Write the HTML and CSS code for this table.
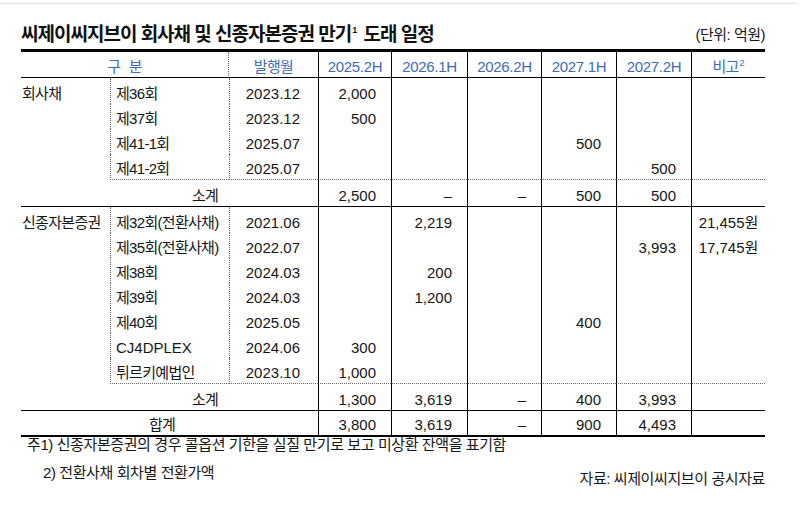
FILE: index.html
```html
<!DOCTYPE html>
<html lang="ko">
<head>
<meta charset="utf-8">
<link rel="stylesheet" href="styles.css">
</head>
<body>
<div class="page">
  <div class="titlebar">
    <h1 class="title">씨제이씨지브이 회사채 및 신종자본증권 만기<sup>1</sup> 도래 일정</h1>
    <div class="unit">(단위: 억원)</div>
  </div>
  <table class="tbl">
    <colgroup>
      <col class="w1"><col class="w2"><col class="w3"><col class="w4"><col class="w5"><col class="w6"><col class="w7"><col class="w8"><col class="w9">
    </colgroup>
    <thead>
      <tr>
        <th colspan="2" class="h-gubun kr">구 분</th>
        <th class="kr">발행월</th>
        <th class="hn">2025.2H</th>
        <th class="hn">2026.1H</th>
        <th class="hn">2026.2H</th>
        <th class="hn">2027.1H</th>
        <th class="hn">2027.2H</th>
        <th class="hn kr">비고<sup>2</sup></th>
      </tr>
    </thead>
    <tbody>
      <tr class="first">
        <td rowspan="5" class="c1 kr grp">회사채</td>
        <td class="c2 kr">제36회</td><td class="c3">2023.12</td>
        <td class="n">2,000</td><td class="n"></td><td class="n"></td><td class="n"></td><td class="n"></td><td class="n note"></td>
      </tr>
      <tr>
        <td class="c2 kr">제37회</td><td class="c3">2023.12</td>
        <td class="n">500</td><td class="n"></td><td class="n"></td><td class="n"></td><td class="n"></td><td class="n note"></td>
      </tr>
      <tr>
        <td class="c2 kr">제41-1회</td><td class="c3">2025.07</td>
        <td class="n"></td><td class="n"></td><td class="n"></td><td class="n">500</td><td class="n"></td><td class="n note"></td>
      </tr>
      <tr class="last">
        <td class="c2 kr">제41-2회</td><td class="c3">2025.07</td>
        <td class="n"></td><td class="n"></td><td class="n"></td><td class="n"></td><td class="n">500</td><td class="n note"></td>
      </tr>
      <tr class="sub">
        <td colspan="2" class="subl kr">소계</td>
        <td class="n">2,500</td><td class="n">–</td><td class="n">–</td><td class="n">500</td><td class="n">500</td><td class="n note"></td>
      </tr>
      <tr class="first">
        <td rowspan="8" class="c1 kr grp">신종자본증권</td>
        <td class="c2 kr">제32회(전환사채)</td><td class="c3">2021.06</td>
        <td class="n"></td><td class="n">2,219</td><td class="n"></td><td class="n"></td><td class="n"></td><td class="n note">21,455원</td>
      </tr>
      <tr>
        <td class="c2 kr">제35회(전환사채)</td><td class="c3">2022.07</td>
        <td class="n"></td><td class="n"></td><td class="n"></td><td class="n"></td><td class="n">3,993</td><td class="n note">17,745원</td>
      </tr>
      <tr>
        <td class="c2 kr">제38회</td><td class="c3">2024.03</td>
        <td class="n"></td><td class="n">200</td><td class="n"></td><td class="n"></td><td class="n"></td><td class="n note"></td>
      </tr>
      <tr>
        <td class="c2 kr">제39회</td><td class="c3">2024.03</td>
        <td class="n"></td><td class="n">1,200</td><td class="n"></td><td class="n"></td><td class="n"></td><td class="n note"></td>
      </tr>
      <tr>
        <td class="c2 kr">제40회</td><td class="c3">2025.05</td>
        <td class="n"></td><td class="n"></td><td class="n"></td><td class="n">400</td><td class="n"></td><td class="n note"></td>
      </tr>
      <tr>
        <td class="c2">CJ4DPLEX</td><td class="c3">2024.06</td>
        <td class="n">300</td><td class="n"></td><td class="n"></td><td class="n"></td><td class="n"></td><td class="n note"></td>
      </tr>
      <tr class="last">
        <td class="c2 kr">튀르키예법인</td><td class="c3">2023.10</td>
        <td class="n">1,000</td><td class="n"></td><td class="n"></td><td class="n"></td><td class="n"></td><td class="n note"></td>
      </tr>
      <tr class="sub">
        <td colspan="2" class="subl kr">소계</td>
        <td class="n">1,300</td><td class="n">3,619</td><td class="n">–</td><td class="n">400</td><td class="n">3,993</td><td class="n note"></td>
      </tr>
      <tr class="total">
        <td colspan="3" class="totl kr">합계</td>
        <td class="n">3,800</td><td class="n">3,619</td><td class="n">–</td><td class="n">900</td><td class="n">4,493</td><td class="n note"></td>
      </tr>
    </tbody>
  </table>
  <div class="foot">
    <div class="fn1">주1) 신종자본증권의 경우 콜옵션 기한을 실질 만기로 보고 미상환 잔액을 표기함</div>
    <div class="fn-row">
      <div class="fn2">2) 전환사채 회차별 전환가액</div>
      <div class="src">자료: 씨제이씨지브이 공시자료</div>
    </div>
  </div>
</div>
</body>
</html>
```
FILE: styles.css
```css
html, body {
  margin: 0;
  padding: 0;
  background: #fff;
}
body {
  font-family: "Liberation Sans", "Noto Sans CJK KR", sans-serif;
  color: #161616;
  font-size: 15px;
}
.page {
  margin-top: 3px;
  width: 797px;
  border-top: 1px solid #e2e2e2;
  padding: 19px 0 0 21px;
  box-sizing: border-box;
}
.titlebar {
  width: 744px;
  height: 24px;
  margin-bottom: 2px;
  display: flex;
  align-items: center;
  justify-content: space-between;
}
.title {
  margin: 0;
  font-size: 19px;
  font-weight: bold;
  letter-spacing: -1px;
  line-height: 24px;
  color: #111;
}
.title sup {
  font-size: 9px;
  vertical-align: 8px;
  line-height: 0;
  letter-spacing: 0;
  margin-left: 1px;
  margin-right: 2px;
}
.unit {
  font-size: 15px;
  letter-spacing: -0.5px;
  line-height: 24px;
}
.tbl {
  width: 744px;
  table-layout: fixed;
  border-collapse: separate;
  border-spacing: 0;
  border-top: 3px solid #000;
  border-bottom: 2px solid #000;
}
.w1 { width: 89px; }
.w2 { width: 119px; }
.w3 { width: 89px; }
.w4 { width: 73px; }
.w5 { width: 76px; }
.w6 { width: 74px; }
.w7 { width: 75px; }
.w8 { width: 75px; }
.w9 { width: 74px; }

th, td {
  padding: 5px 15px 0 0;
  line-height: 20px;
  font-weight: normal;
  white-space: nowrap;
  vertical-align: top;
  overflow: visible;
}
.kr { letter-spacing: -0.7px; }
th {
  color: #3e6bbd;
  text-align: center;
  padding: 5px 0 0 0;
  border-bottom: 1px solid #000;
  letter-spacing: -0.3px;
}
th.h-gubun {
  border-right: 1px dotted #666;
  word-spacing: 5px;
}
th.hn { border-left: 1px solid #000; }
th sup {
  font-size: 9px;
  vertical-align: 6px;
  line-height: 0;
  letter-spacing: 0;
  margin-left: 1px;
}
tr.first td { padding-top: 6px; }
.c1 {
  text-align: left;
  padding-left: 1px;
  padding-right: 0;
}
.grp { border-bottom: 1px solid #000; }
.c2 {
  text-align: left;
  padding-left: 5px;
  padding-right: 0;
  border-left: 1px dotted #666;
}
.c3 {
  text-align: right;
  padding-right: 18px;
  border-left: 1px dotted #666;
}
.n {
  text-align: right;
  border-left: 1px solid #000;
}
td.note {
  text-align: center;
  padding-right: 0;
}
tr.last td { border-bottom: 1px dotted #666; }
tr.last td.c1 { border-bottom: 0; }
tr.sub td {
  padding-top: 6px;
  border-bottom: 1px solid #000;
}
.subl {
  text-align: center;
  padding-right: 18px;
}
tr.total td { padding-top: 4px; }
.totl {
  text-align: center;
  padding-right: 15px;
}
.foot {
  width: 744px;
  font-size: 15px;
  letter-spacing: -0.4px;
}
.fn1 {
  line-height: 16px;
  padding-left: 6px;
}
.fn-row {
  display: flex;
  justify-content: space-between;
  align-items: flex-start;
  margin-top: 12px;
}
.fn2 {
  line-height: 16px;
  padding-left: 22px;
}
.src {
  line-height: 16px;
  margin-top: 6px;
}
```
